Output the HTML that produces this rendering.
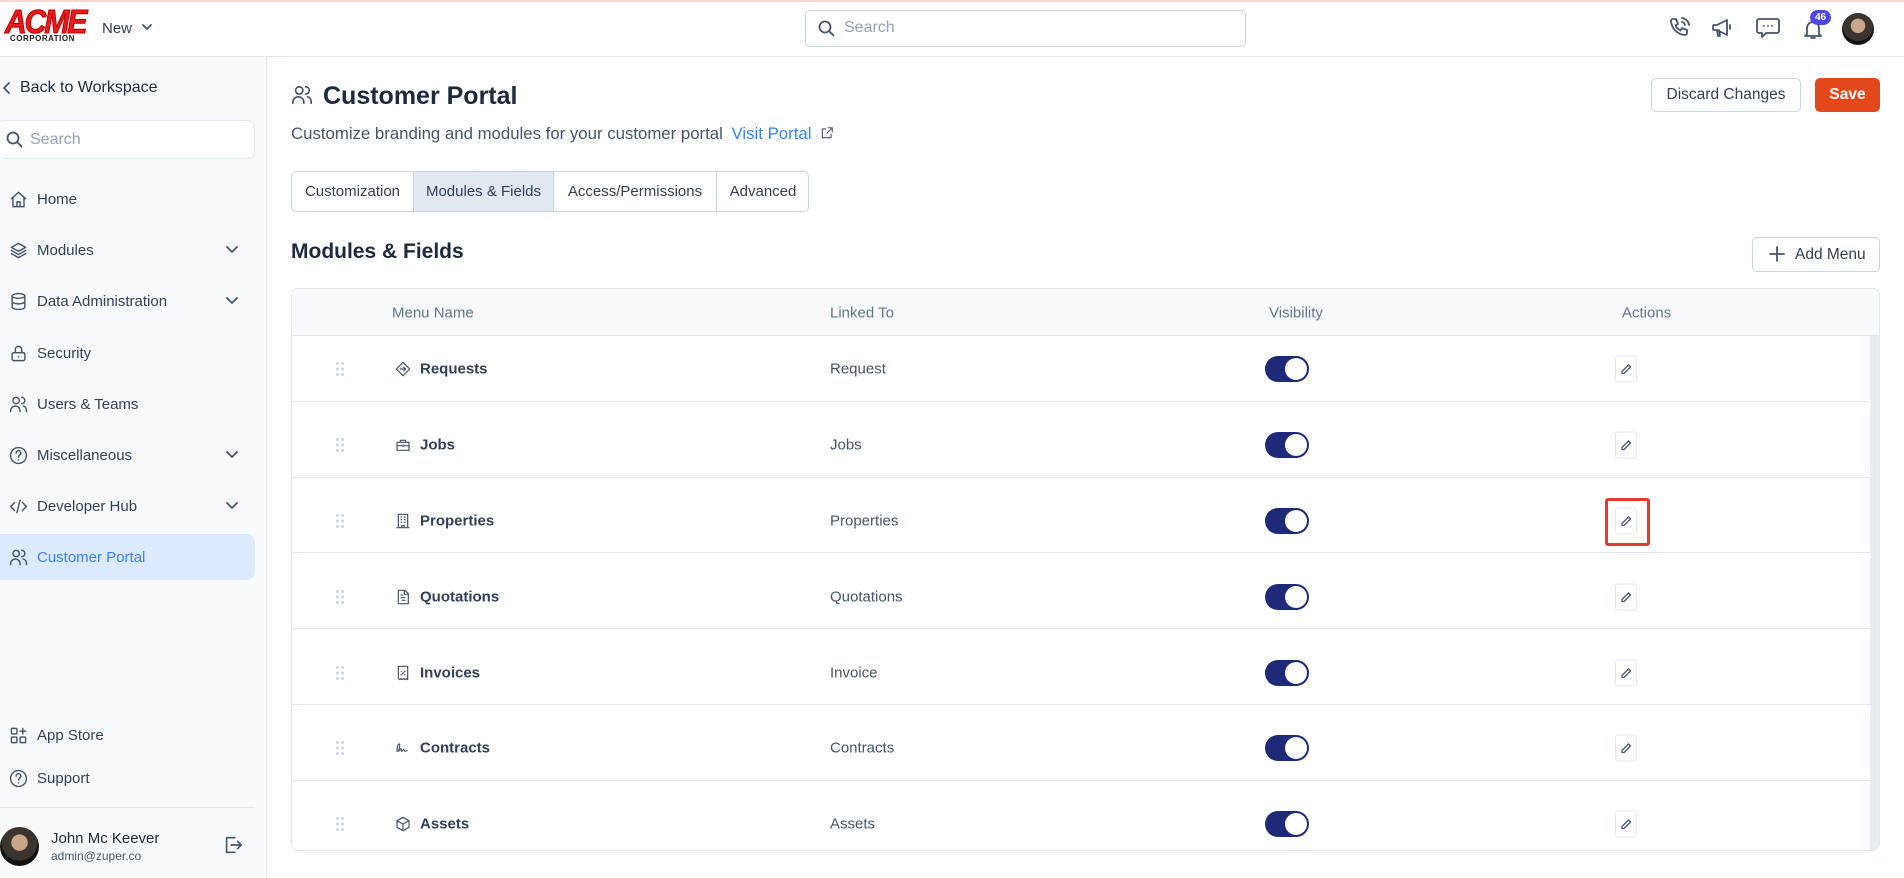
<!DOCTYPE html>
<html><head><meta charset="utf-8"><style>
*{box-sizing:border-box;margin:0;padding:0}
body{width:1904px;height:878px;overflow:hidden;background:#fff;font-family:"Liberation Sans",Arial,sans-serif;color:#1e293b;position:relative}
.abs{position:absolute}
svg{display:block}
.ic{fill:none;stroke:#475569;stroke-width:1.8;stroke-linecap:round;stroke-linejoin:round}
.nav{position:absolute;left:9px;display:flex;align-items:center;font-size:15px;color:#334155;height:24px}
.nav svg{margin-right:9px}
.chev{position:absolute;left:226px}
.row{position:absolute;left:292px;width:1578px;height:1px;background:#e2e8f0}
.cell{position:absolute;font-size:15px;color:#475569;transform:translateY(-50%)}
.name{font-weight:bold;color:#334155}
.drag{position:absolute;left:336px;width:8px;height:14px}
.tog{position:absolute;left:1265px;width:44px;height:26px;border-radius:13px;background:#1e2a78;transform:translateY(-50%)}
.tog:after{content:"";position:absolute;right:2px;top:2px;width:22px;height:22px;border-radius:50%;background:#fff}
.edit{position:absolute;left:1615px;width:22px;height:27px;border:1px solid #e2e8f0;border-radius:3px;transform:translateY(-50%);display:flex;align-items:center;justify-content:center;background:#fff}
</style></head><body>
<div class="abs" style="left:0;top:0;width:1904px;height:2px;background:#f8d7d3"></div>
<div class="abs" style="left:0;top:56px;width:1904px;height:1px;background:#e2e8f0"></div>
<!-- logo -->
<div class="abs" style="left:5px;top:6px;font-family:'Liberation Sans';font-weight:900;font-size:30px;color:#e41e1e;letter-spacing:-2px;font-style:italic;transform:scaleY(1.1);-webkit-text-stroke:1px #b00">ACME</div>
<div class="abs" style="left:10px;top:34px;font-size:8px;font-weight:bold;color:#222;letter-spacing:0.5px">CORPORATION</div>
<div class="abs" style="left:102px;top:20px;font-size:15px;color:#334155">New</div>
<svg class="abs" style="left:142px;top:23px" width="10" height="8"><path d="M1 2l4 4 4-4" class="ic" stroke-width="1.4"/></svg>
<!-- top search -->
<div class="abs" style="left:805px;top:10px;width:441px;height:37px;border:1px solid #cbd5e1;border-radius:5px"></div>
<svg class="abs" style="left:818px;top:20px" width="17" height="17"><circle cx="7" cy="7" r="5.5" class="ic" stroke="#64748b"/><path d="M11 11l4.5 4.5" class="ic" stroke="#64748b"/></svg>
<div class="abs" style="left:844px;top:19px;font-size:16px;color:#94a3b8">Search</div>
<!-- top icons -->
<svg class="abs" style="left:1668px;top:16px" width="24" height="24" viewBox="0 0 24 24"><path class="ic" stroke="#64748b" d="M5 3h3l2 5-2.5 1.5a11 11 0 005 5L14 12l5 2v3a2 2 0 01-2 2A15 15 0 013 5a2 2 0 012-2M14 6a4 4 0 013 3M14 2a8 8 0 017 7"/></svg>
<svg class="abs" style="left:1710px;top:16px" width="24" height="24" viewBox="0 0 24 24"><path class="ic" stroke="#64748b" d="M4 9h3l10-5v15L7 14H4a1 1 0 01-1-1V10a1 1 0 011-1zM7 14l1 6h2l-1-6M20 9v4"/></svg>
<svg class="abs" style="left:1755px;top:16px" width="26" height="24" viewBox="0 0 26 24"><path class="ic" stroke="#64748b" d="M4 3h18a2 2 0 012 2v10a2 2 0 01-2 2H11l-4 4v-4H4a2 2 0 01-2-2V5a2 2 0 012-2z"/><circle cx="9" cy="10" r="1" fill="#64748b"/><circle cx="13" cy="10" r="1" fill="#64748b"/><circle cx="17" cy="10" r="1" fill="#64748b"/></svg>
<svg class="abs" style="left:1801px;top:17px" width="24" height="24" viewBox="0 0 24 24"><path class="ic" stroke="#64748b" d="M6 17V11a6 6 0 0112 0v6l2 2H4zM10 21h4"/></svg>
<div class="abs" style="left:1810px;top:10px;width:21px;height:15px;border-radius:8px;background:#4f46e5;color:#fff;font-size:10px;font-weight:bold;text-align:center;line-height:15px">46</div>
<div class="abs" style="left:1842px;top:13px;width:32px;height:32px;border-radius:50%;background:radial-gradient(circle at 50% 40%,#c9a58a 0 28%,#3a332e 30% 60%,#111 62%)"></div>
<!-- sidebar -->
<div class="abs" style="left:0;top:57px;width:267px;height:821px;background:#f8fafc;border-right:1px solid #e2e8f0"></div>
<svg class="abs" style="left:2px;top:82px" width="10" height="12"><path d="M7 1L2 6l5 5" class="ic" stroke="#1e293b"/></svg>
<div class="abs" style="left:20px;top:79px;font-size:16px;color:#1e293b">Back to Workspace</div>
<div class="abs" style="left:-2px;top:120px;width:257px;height:39px;background:#fff;border:1px solid #e2e8f0;border-radius:6px"></div>
<svg class="abs" style="left:6px;top:131px" width="17" height="17"><circle cx="7" cy="7" r="5.5" class="ic" stroke="#64748b"/><path d="M11 11l4.5 4.5" class="ic" stroke="#64748b"/></svg>
<div class="abs" style="left:30px;top:131px;font-size:16px;color:#94a3b8">Search</div>

<div class="nav" style="top:187px"><svg width="19" height="19" viewBox="0 0 24 24"><path class="ic" d="M3 11l9-8 9 8M5 9v12h14V9M10 21v-6h4v6"/></svg>Home</div>
<div class="nav" style="top:238px"><svg width="19" height="19" viewBox="0 0 24 24"><path class="ic" d="M12 3l9 5-9 5-9-5zM3 12l9 5 9-5M3 16l9 5 9-5"/></svg>Modules</div>
<svg class="chev" style="top:246px" width="12" height="8"><path d="M1 1l5 5 5-5" class="ic"/></svg>
<div class="nav" style="top:289px"><svg width="19" height="19" viewBox="0 0 24 24"><ellipse cx="12" cy="5" rx="8" ry="3" class="ic"/><path class="ic" d="M4 5v14c0 1.7 3.6 3 8 3s8-1.3 8-3V5M4 12c0 1.7 3.6 3 8 3s8-1.3 8-3"/></svg>Data Administration</div>
<svg class="chev" style="top:297px" width="12" height="8"><path d="M1 1l5 5 5-5" class="ic"/></svg>
<div class="nav" style="top:341px"><svg width="19" height="19" viewBox="0 0 24 24"><rect x="4" y="11" width="16" height="10" rx="2" class="ic"/><path class="ic" d="M8 11V7a4 4 0 018 0v4"/><circle cx="12" cy="16" r="1" fill="#475569"/></svg>Security</div>
<div class="nav" style="top:392px"><svg width="19" height="19" viewBox="0 0 24 24"><circle cx="9" cy="7" r="4" class="ic"/><path class="ic" d="M2 21v-1a6 6 0 0112 0v1M16 3a4 4 0 010 8M18 14a5 5 0 014 5v2"/></svg>Users &amp; Teams</div>
<div class="nav" style="top:443px"><svg width="19" height="19" viewBox="0 0 24 24"><circle cx="12" cy="12" r="10" class="ic"/><path class="ic" d="M9 9a3 3 0 115 2c-1 .7-2 1.3-2 3"/><circle cx="12" cy="17.5" r="1" fill="#475569"/></svg>Miscellaneous</div>
<svg class="chev" style="top:451px" width="12" height="8"><path d="M1 1l5 5 5-5" class="ic"/></svg>
<div class="nav" style="top:494px"><svg width="19" height="19" viewBox="0 0 24 24"><path class="ic" d="M7 7l-5 5 5 5M17 7l5 5-5 5M14 4l-4 16"/></svg>Developer Hub</div>
<svg class="chev" style="top:502px" width="12" height="8"><path d="M1 1l5 5 5-5" class="ic"/></svg>
<div class="abs" style="left:0;top:534px;width:255px;height:46px;background:#dbeafe;border-radius:0 8px 8px 0"></div>
<div class="nav" style="top:545px;color:#3b82f6"><svg width="19" height="19" viewBox="0 0 24 24"><circle cx="9" cy="7" r="4" class="ic" stroke="#3b82f6"/><path class="ic" stroke="#3b82f6" d="M2 21v-1a6 6 0 0112 0v1M16 3a4 4 0 010 8M18 14a5 5 0 014 5v2"/></svg>Customer Portal</div>

<div class="nav" style="top:723px"><svg width="19" height="19" viewBox="0 0 24 24"><rect x="3" y="3" width="7" height="7" rx="1" class="ic"/><rect x="3" y="14" width="7" height="7" rx="1" class="ic"/><rect x="14" y="14" width="7" height="7" rx="1" class="ic"/><path class="ic" d="M17.5 3v7M14 6.5h7"/></svg>App Store</div>
<div class="nav" style="top:766px"><svg width="19" height="19" viewBox="0 0 24 24"><circle cx="12" cy="12" r="10" class="ic"/><path class="ic" d="M9 9a3 3 0 115 2c-1 .7-2 1.3-2 3"/><circle cx="12" cy="17.5" r="1" fill="#475569"/></svg>Support</div>
<div class="abs" style="left:0;top:807px;width:255px;height:1px;background:#e2e8f0"></div>
<div class="abs" style="left:0;top:827px;width:39px;height:39px;border-radius:50%;background:radial-gradient(circle at 50% 40%,#c9a58a 0 26%,#3a332e 28% 58%,#111 60%)"></div>
<div class="abs" style="left:51px;top:830px;font-size:15px;color:#1e293b">John Mc Keever</div>
<div class="abs" style="left:51px;top:849px;font-size:12px;color:#475569">admin@zuper.co</div>
<svg class="abs" style="left:222px;top:834px" width="22" height="22" viewBox="0 0 24 24"><path class="ic" stroke="#94a3b8" d="M14 4H5v16h9M10 12h11M17 8l4 4-4 4"/></svg>

<!-- main header -->
<svg class="abs" style="left:291px;top:84px" width="22" height="22" viewBox="0 0 24 24"><circle cx="9" cy="7" r="4" class="ic"/><path class="ic" d="M2 21v-1a6 6 0 0112 0v1M16 3a4 4 0 010 8M18 14a5 5 0 014 5v2"/></svg>
<div class="abs" style="left:323px;top:82px;font-size:25px;font-weight:bold;color:#1e293b">Customer Portal</div>
<div class="abs" style="left:291px;top:124px;font-size:16.8px;color:#475569;white-space:nowrap">Customize branding and modules for your customer portal <span style="color:#3b82f6;margin-left:4px">Visit Portal</span></div>
<svg class="abs" style="left:820px;top:126px" width="14" height="14" viewBox="0 0 24 24"><path class="ic" stroke="#3b82f6" stroke-width="2.2" d="M14 3h7v7M21 3l-9 9M19 14v6H4V5h6"/></svg>
<div class="abs" style="left:1651px;top:78px;width:150px;height:34px;border:1px solid #cbd5e1;border-radius:5px;font-size:15.5px;color:#334155;text-align:center;line-height:32px">Discard Changes</div>
<div class="abs" style="left:1815px;top:78px;width:65px;height:34px;background:#e3481c;border-radius:5px;font-size:15.5px;font-weight:bold;color:#fff;text-align:center;line-height:34px">Save</div>
<!-- tabs -->
<div class="abs" style="left:291px;top:171px;width:518px;height:41px;border:1px solid #cbd5e1;border-radius:5px;overflow:hidden;font-size:15px;color:#334155">
<div class="abs" style="left:0;top:0;width:121px;height:39px;line-height:39px;text-align:center">Customization</div>
<div class="abs" style="left:121px;top:0;width:141px;height:39px;line-height:39px;text-align:center;background:#e2e8f0;border-left:1px solid #cbd5e1;border-right:1px solid #cbd5e1">Modules &amp; Fields</div>
<div class="abs" style="left:262px;top:0;width:163px;height:39px;line-height:39px;text-align:center;border-right:1px solid #cbd5e1">Access/Permissions</div>
<div class="abs" style="left:425px;top:0;width:92px;height:39px;line-height:39px;text-align:center">Advanced</div>
</div>
<div class="abs" style="left:291px;top:240px;font-size:21px;font-weight:bold;color:#1e293b">Modules &amp; Fields</div>
<div class="abs" style="left:1752px;top:237px;width:128px;height:35px;border:1px solid #cbd5e1;border-radius:5px;font-size:15.5px;color:#334155;line-height:33px;padding-left:42px">Add Menu</div>
<svg class="abs" style="left:1769px;top:246px" width="16" height="16"><path d="M8 1v14M1 8h14" class="ic" stroke="#334155"/></svg>
<!-- table -->
<div class="abs" style="left:291px;top:288px;width:1589px;height:563px;border:1px solid #e2e8f0;border-radius:7px;overflow:hidden">
<div class="abs" style="left:0;top:0;width:1589px;height:47px;background:#f8fafc;border-bottom:1px solid #e2e8f0"></div>
<div class="abs" style="left:1578px;top:47px;width:10px;height:516px;background:#e9edf2"></div>
</div>
<div class="cell" style="left:392px;top:313px;color:#64748b">Menu Name</div>
<div class="cell" style="left:830px;top:313px;color:#64748b">Linked To</div>
<div class="cell" style="left:1269px;top:313px;color:#64748b">Visibility</div>
<div class="cell" style="left:1622px;top:313px;color:#64748b">Actions</div>

<div class="row" style="top:401px"></div><div class="row" style="top:477px"></div><div class="row" style="top:552px"></div><div class="row" style="top:628px"></div><div class="row" style="top:704px"></div><div class="row" style="top:780px"></div>

<svg width="0" height="0" style="position:absolute"><defs><g id="dots"><circle cx="1.5" cy="1.5" r="1.5" fill="#cbd5e1"/><circle cx="6.5" cy="1.5" r="1.5" fill="#cbd5e1"/><circle cx="1.5" cy="7" r="1.5" fill="#cbd5e1"/><circle cx="6.5" cy="7" r="1.5" fill="#cbd5e1"/><circle cx="1.5" cy="12.5" r="1.5" fill="#cbd5e1"/><circle cx="6.5" cy="12.5" r="1.5" fill="#cbd5e1"/></g>
<g id="pen"><path d="M9.5 2.5l2 2L5 11H3V9z" fill="none" stroke="#475569" stroke-width="1.3" stroke-linejoin="round"/></g></defs></svg>

<svg class="drag" style="top:362px" width="8" height="14"><use href="#dots"/></svg>
<svg class="abs" style="left:395px;top:361px" width="16" height="16" viewBox="0 0 24 24"><path class="ic" d="M12 2l10 10-10 10L2 12zM8 12h8M13 9l3 3-3 3"/></svg>
<div class="cell name" style="left:420px;top:369px">Requests</div>
<div class="cell" style="left:830px;top:369px">Request</div>
<div class="tog" style="top:369px"></div>
<div class="edit" style="top:369px"><svg width="14" height="14"><use href="#pen"/></svg></div>

<svg class="drag" style="top:438px" width="8" height="14"><use href="#dots"/></svg>
<svg class="abs" style="left:395px;top:437px" width="16" height="16" viewBox="0 0 24 24"><path class="ic" d="M3 8h18v12H3zM8 8V5h8v3M3 13h18M12 12v2"/></svg>
<div class="cell name" style="left:420px;top:445px">Jobs</div>
<div class="cell" style="left:830px;top:445px">Jobs</div>
<div class="tog" style="top:445px"></div>
<div class="edit" style="top:445px"><svg width="14" height="14"><use href="#pen"/></svg></div>

<svg class="drag" style="top:514px" width="8" height="14"><use href="#dots"/></svg>
<svg class="abs" style="left:395px;top:513px" width="16" height="16" viewBox="0 0 24 24"><path class="ic" d="M5 2h14v20H5zM3 22h18M9 6h1M14 6h1M9 10h1M14 10h1M9 14h1M14 14h1M10 22v-3h4v3"/></svg>
<div class="cell name" style="left:420px;top:521px">Properties</div>
<div class="cell" style="left:830px;top:521px">Properties</div>
<div class="tog" style="top:521px"></div>
<div class="edit" style="top:521px"><svg width="14" height="14"><use href="#pen"/></svg></div>
<div class="abs" style="left:1605px;top:498px;width:45px;height:48px;border:3px solid #e53935;border-radius:3px"></div>

<svg class="drag" style="top:590px" width="8" height="14"><use href="#dots"/></svg>
<svg class="abs" style="left:395px;top:589px" width="16" height="16" viewBox="0 0 24 24"><path class="ic" d="M5 2h10l5 5v15H5zM14 2v6h6M9 9h2M9 13h6M11 17h4"/></svg>
<div class="cell name" style="left:420px;top:597px">Quotations</div>
<div class="cell" style="left:830px;top:597px">Quotations</div>
<div class="tog" style="top:597px"></div>
<div class="edit" style="top:597px"><svg width="14" height="14"><use href="#pen"/></svg></div>

<svg class="drag" style="top:666px" width="8" height="14"><use href="#dots"/></svg>
<svg class="abs" style="left:395px;top:665px" width="16" height="16" viewBox="0 0 24 24"><path class="ic" d="M5 2h14v20l-2-1.5-2 1.5-2-1.5-2 1.5-2-1.5-2 1.5-2-1.5zM9 15l6-6M9.5 9.5h.01M14.5 14.5h.01"/></svg>
<div class="cell name" style="left:420px;top:673px">Invoices</div>
<div class="cell" style="left:830px;top:673px">Invoice</div>
<div class="tog" style="top:673px"></div>
<div class="edit" style="top:673px"><svg width="14" height="14"><use href="#pen"/></svg></div>

<svg class="drag" style="top:741px" width="8" height="14"><use href="#dots"/></svg>
<svg class="abs" style="left:395px;top:740px" width="16" height="16" viewBox="0 0 24 24"><path class="ic" d="M3 17c0-5 1-11 3-11s1 6-1 11c2-1 3-4 4-4s0 4 1 4 2-3 3-3 1 3 2 3 2-1 3-1"/></svg>
<div class="cell name" style="left:420px;top:748px">Contracts</div>
<div class="cell" style="left:830px;top:748px">Contracts</div>
<div class="tog" style="top:748px"></div>
<div class="edit" style="top:748px"><svg width="14" height="14"><use href="#pen"/></svg></div>

<svg class="drag" style="top:817px" width="8" height="14"><use href="#dots"/></svg>
<svg class="abs" style="left:395px;top:816px" width="16" height="16" viewBox="0 0 24 24"><path class="ic" d="M12 2l9 5v10l-9 5-9-5V7zM3 7l9 5 9-5M12 12v10"/></svg>
<div class="cell name" style="left:420px;top:824px">Assets</div>
<div class="cell" style="left:830px;top:824px">Assets</div>
<div class="tog" style="top:824px"></div>
<div class="edit" style="top:824px"><svg width="14" height="14"><use href="#pen"/></svg></div>
</body></html>
